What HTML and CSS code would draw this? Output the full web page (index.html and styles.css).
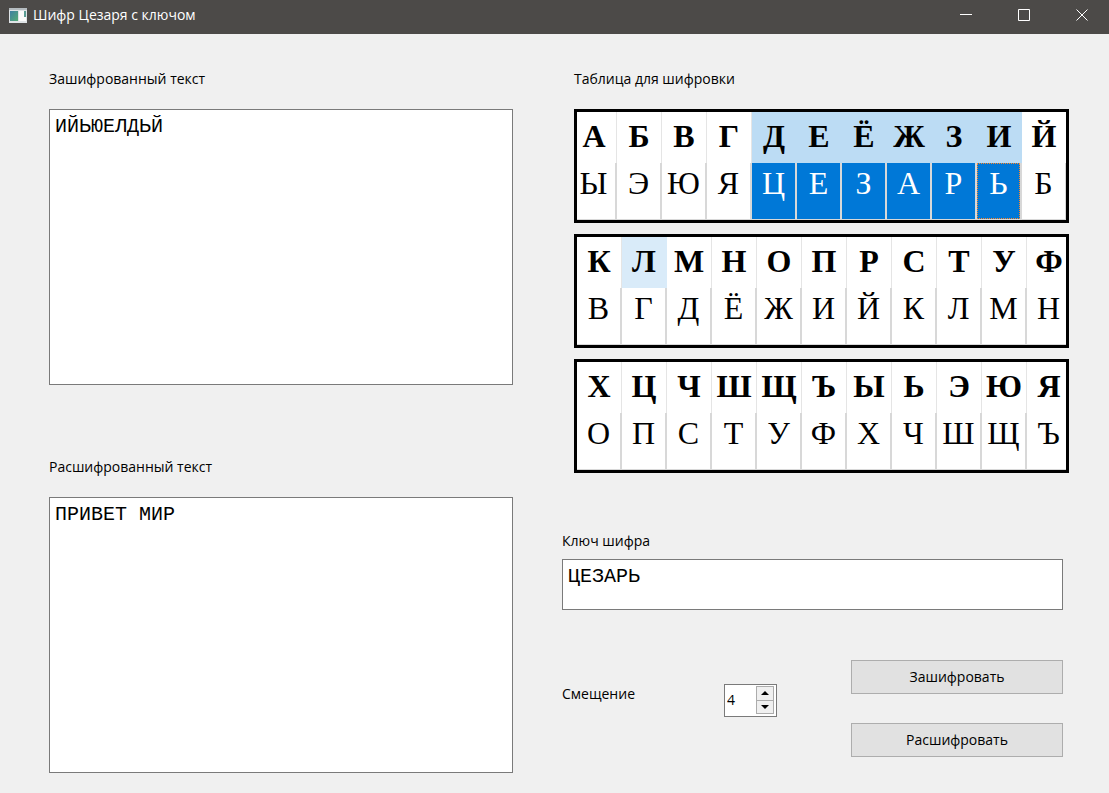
FILE: index.html
```html
<!DOCTYPE html>
<html lang="ru">
<head>
<meta charset="utf-8">
<title>Шифр Цезаря с ключом</title>
<link rel="stylesheet" href="styles.css">
</head>
<body>
<div class="window">
  <header class="titlebar">
    <svg class="app-icon" width="18" height="15" viewBox="0 0 18 15" aria-hidden="true">
      <defs><linearGradient id="g" x1="0" y1="0" x2="1" y2="1"><stop offset="0" stop-color="#3f7fa3"/><stop offset="1" stop-color="#55ab74"/></linearGradient></defs>
      <rect width="18" height="15" fill="#dfe3e6"/>
      <rect y="0" width="18" height="2" fill="#b5bcc0"/>
      <rect x="1" y="3" width="8" height="10" fill="url(#g)"/>
      <rect x="10" y="3" width="7" height="10" fill="#fbfbfb"/>
      <rect x="15" y="3" width="2" height="6" fill="#5a9c93"/>
    </svg>
    <h1 class="title">Шифр Цезаря с ключом</h1>
    <div class="controls">
      <button class="control" type="button" aria-label="Свернуть"><svg width="12" height="12"><path d="M0 5.5H12"/></svg></button>
      <button class="control" type="button" aria-label="Развернуть"><svg width="12" height="12"><path d="M.5.5H11.5V11.5H.5Z"/></svg></button>
      <button class="control" type="button" aria-label="Закрыть"><svg width="12" height="12"><path d="M.5.5L11.5 11.5M11.5.5L.5 11.5"/></svg></button>
    </div>
  </header>
  <main class="content">
    <section class="texts">
      <label class="label" for="encrypted">Зашифрованный текст</label>
      <textarea class="field area" id="encrypted" spellcheck="false">ИЙЬЮЕЛДЬЙ</textarea>
      <label class="label label-second" for="decrypted">Расшифрованный текст</label>
      <textarea class="field area" id="decrypted" spellcheck="false">ПРИВЕТ МИР</textarea>
    </section>
    <section class="side">
      <div class="tables">
        <h2 class="label">Таблица для шифровки</h2>
        <div class="frame">
          <table class="cipher scrolled">
            <thead><tr><th>А</th><th>Б</th><th>В</th><th>Г</th><th class="on">Д</th><th class="on">Е</th><th class="on">Ё</th><th class="on">Ж</th><th class="on">З</th><th class="on">И</th><th>Й</th></tr></thead>
            <tbody><tr><td>Ы</td><td>Э</td><td>Ю</td><td>Я</td><td class="sel">Ц</td><td class="sel">Е</td><td class="sel">З</td><td class="sel">А</td><td class="sel">Р</td><td class="sel current">Ь</td><td>Б</td></tr></tbody>
          </table>
        </div>
        <div class="frame">
          <table class="cipher">
            <thead><tr><th>К</th><th class="hover">Л</th><th>М</th><th>Н</th><th>О</th><th>П</th><th>Р</th><th>С</th><th>Т</th><th>У</th><th>Ф</th></tr></thead>
            <tbody><tr><td>В</td><td>Г</td><td>Д</td><td>Ё</td><td>Ж</td><td>И</td><td>Й</td><td>К</td><td>Л</td><td>М</td><td>Н</td></tr></tbody>
          </table>
        </div>
        <div class="frame">
          <table class="cipher">
            <thead><tr><th>Х</th><th>Ц</th><th>Ч</th><th>Ш</th><th>Щ</th><th>Ъ</th><th>Ы</th><th>Ь</th><th>Э</th><th>Ю</th><th>Я</th></tr></thead>
            <tbody><tr><td>О</td><td>П</td><td>С</td><td>Т</td><td>У</td><td>Ф</td><td>Х</td><td>Ч</td><td>Ш</td><td>Щ</td><td>Ъ</td></tr></tbody>
          </table>
        </div>
      </div>
      <div class="settings">
        <label class="label label-key" for="key">Ключ шифра</label>
        <textarea class="field key" id="key" spellcheck="false">ЦЕЗАРЬ</textarea>
        <div class="actions">
          <div class="shift">
            <label class="label label-shift" for="shift">Смещение</label>
            <div class="spin">
              <input class="spin-value" id="shift" type="number" value="4">
              <div class="spin-buttons">
                <button class="step" type="button" aria-label="Больше"><svg width="8" height="4"><path d="M0 4L4 0L8 4Z"/></svg></button>
                <button class="step" type="button" aria-label="Меньше"><svg width="8" height="4"><path d="M0 0L4 4L8 0Z"/></svg></button>
              </div>
            </div>
          </div>
          <div class="buttons">
            <button class="button" type="button">Зашифровать</button>
            <button class="button" type="button">Расшифровать</button>
          </div>
        </div>
      </div>
    </section>
  </main>
</div>
</body>
</html>
```
FILE: styles.css
```css
* { box-sizing: border-box; }
body {
  margin: 0;
  background: #f0f0f0;
  color: #000;
  font: 14px/20px "Open Sans", "Noto Sans", sans-serif;
}
button, input, textarea { font: inherit; color: inherit; margin: 0; }
.window { min-height: 100vh; display: flex; flex-direction: column; }
.titlebar {
  height: 34px;
  display: flex;
  align-items: center;
  gap: 6px;
  padding: 0 0 4px 9px;
  background: #4c4a48;
  color: #fff;
}
.title { margin: 0; font-size: 14px; font-weight: 400; line-height: 20px; }
.controls { margin-left: auto; display: flex; }
.control {
  width: 58px;
  height: 30px;
  padding: 0 0 0 3px;
  border: 0;
  background: none;
  display: grid;
  place-items: center;
}
.control svg { fill: none; stroke: #fff; }

.content {
  flex: 1;
  display: grid;
  grid-template-columns: 464fr 507fr;
  gap: 49px;
  padding: 35px 40px 20px 49px;
}
.label { margin: 0; font-size: 14px; font-weight: 400; line-height: 20px; }
.texts { display: flex; flex-direction: column; }
.label-second { margin-top: 72px; }
.field {
  display: block;
  width: 100%;
  padding: 5px;
  border: 1px solid #7a7a7a;
  background: #fff;
  resize: none;
  outline: 0;
  font: 20px/24px "Courier New", "Liberation Mono", monospace;
}
.area { flex: 1; margin-top: 20px; }

.tables { display: grid; gap: 11px; padding-left: 12px; }
.tables .label { margin-bottom: 9px; }
.frame { border: 3px solid #000; background: #fff; overflow: hidden; }
.cipher {
  width: 495px;
  table-layout: fixed;
  border-collapse: separate;
  border-spacing: 0;
  font: 32px/36px "Liberation Serif", serif;
  text-align: center;
}
.scrolled { margin-left: -5px; }
.cipher th {
  height: 51px;
  padding: 0 0 3px;
  border-right: 1px solid #e5e5e5;
  font-weight: 700;
}
.cipher td {
  height: 57px;
  padding: 2px 0 0;
  vertical-align: top;
  border-right: 2px solid #d8d8d8;
  border-bottom: 1px solid #d8d8d8;
}
.cipher .on { background: #bcdcf4; border-color: #bcdcf4; }
.cipher .hover { background: #d9ebf9; border-color: #d9ebf9; }
.cipher .sel { background: #0078d7; background-clip: padding-box; color: #fff; }
.cipher .current { position: relative; }
.current::after {
  content: "";
  position: absolute;
  inset: 0;
  border: 1px dotted #ff8728;
}

.settings { padding-right: 6px; margin-top: 58px; }
.label-key { display: block; }
.key { height: 51px; margin-top: 8px; }
.actions {
  display: flex;
  justify-content: space-between;
  margin-top: 50px;
}
.shift { display: flex; align-items: flex-start; padding-top: 24px; }
.label-shift { width: 162px; }
.spin {
  display: flex;
  width: 53px;
  height: 33px;
  padding: 1px 2px 2px;
  border: 1px solid #7a7a7a;
  background: #fff;
}
.spin-value {
  flex: 1;
  min-width: 0;
  padding: 0;
  border: 0;
  background: none;
  outline: 0;
  appearance: textfield;
}
.spin-value::-webkit-inner-spin-button { appearance: none; }
.spin-buttons { display: grid; width: 18px; }
.step {
  display: grid;
  place-items: center;
  padding: 0;
  border: 1px solid #acacac;
  background: #f0f0f0;
}
.step + .step { border-top: 0; }
.buttons { display: grid; gap: 29px; width: 212px; }
.button {
  height: 34px;
  padding: 0;
  border: 1px solid #adadad;
  background: #e1e1e1;
}
```
